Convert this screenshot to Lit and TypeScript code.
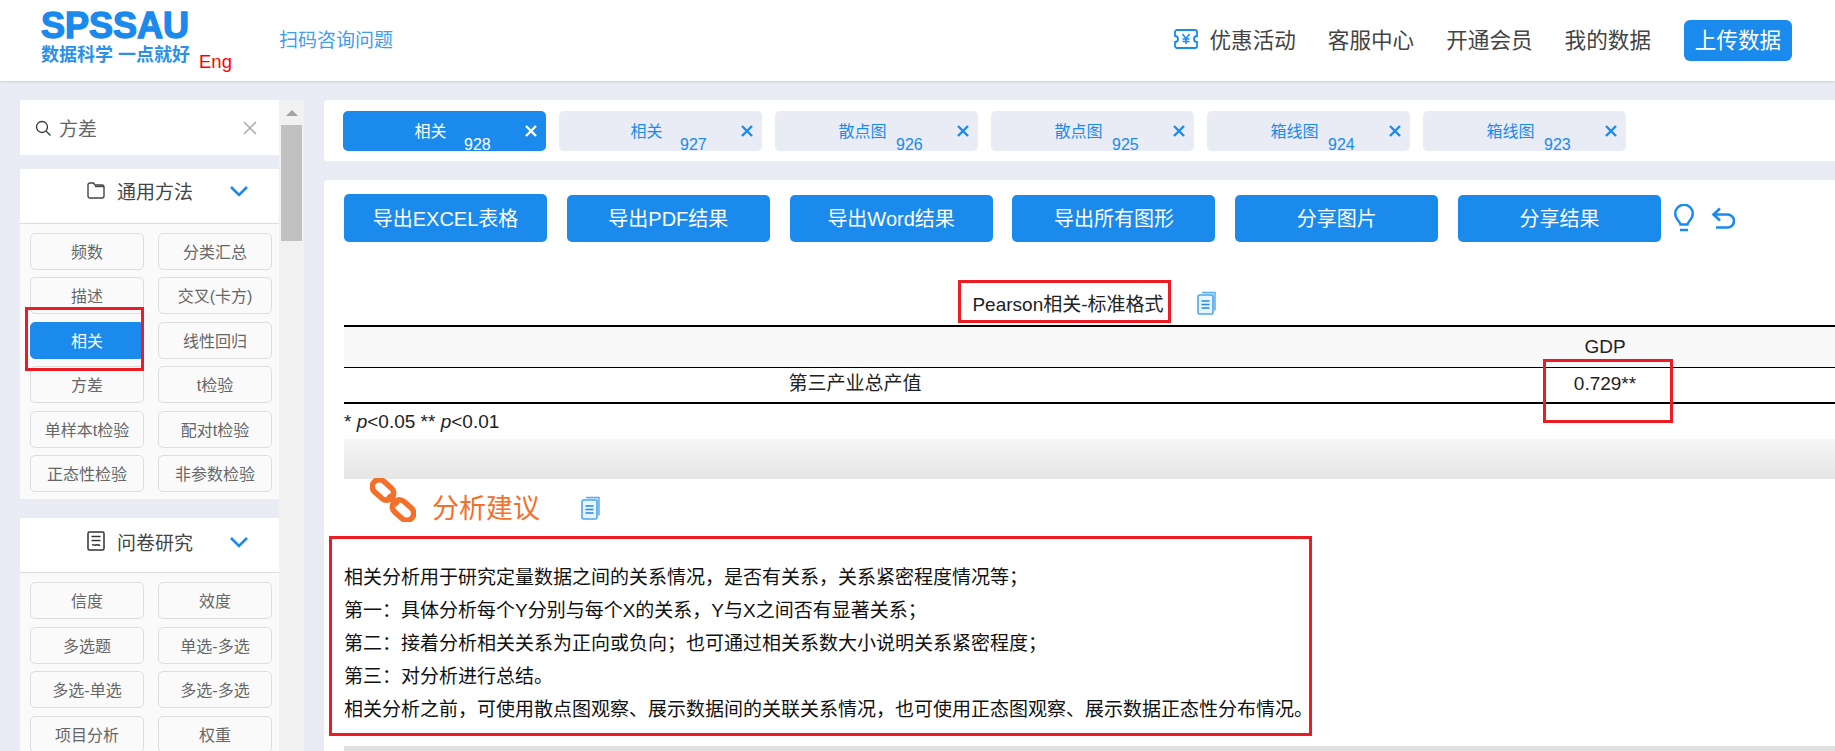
import { LitElement, html, css, svg } from "lit";
import { customElement } from "lit/decorators.js";

const tabs = [
  ["相关", "928"], ["相关", "927"], ["散点图", "926"], ["散点图", "925"], ["箱线图", "924"], ["箱线图", "923"],
];
const exportsList = ["导出EXCEL表格", "导出PDF结果", "导出Word结果", "导出所有图形", "分享图片", "分享结果"];
const general = ["频数", "分类汇总", "描述", "交叉(卡方)", "相关", "线性回归", "方差", "t检验", "单样本t检验", "配对t检验", "正态性检验", "非参数检验"];
const survey = ["信度", "效度", "多选题", "单选-多选", "多选-单选", "多选-多选", "项目分析", "权重"];
const advice = [
  "相关分析用于研究定量数据之间的关系情况，是否有关系，关系紧密程度情况等；",
  "第一：具体分析每个Y分别与每个X的关系，Y与X之间否有显著关系；",
  "第二：接着分析相关关系为正向或负向；也可通过相关系数大小说明关系紧密程度；",
  "第三：对分析进行总结。",
  "相关分析之前，可使用散点图观察、展示数据间的关联关系情况，也可使用正态图观察、展示数据正态性分布情况。",
];

const chevron = svg`<svg class="chev" width="20" height="12" viewBox="0 0 20 12"><path d="M2 2l8 8 8-8" fill="none" stroke="#1a8aec" stroke-width="2.6"/></svg>`;
const folder = svg`<svg width="18" height="17" viewBox="0 0 18 17" fill="none" stroke="#444" stroke-width="1.4"><path d="M1 3a2 2 0 0 1 2-2h3.5l1.5 2h7a2 2 0 0 1 2 2v9a2 2 0 0 1-2 2H3a2 2 0 0 1-2-2z"/><path d="M8 4.5h9"/></svg>`;
const doc = svg`<svg width="18" height="20" viewBox="0 0 18 20" fill="none" stroke="#333" stroke-width="1.5"><rect x="1" y="1" width="16" height="18" rx="1.5"/><path d="M4.5 5.5h9M4.5 9.5h9M5 14c1.5-1 2 .8 4 0s2.500.8 4 0"/></svg>`;
const copy = svg`<svg width="19" height="24" viewBox="0 0 19 24"><path d="M5 1.500h13v18" fill="#d6eafc" stroke="#5aaef0" stroke-width="1.500"/><rect x="1" y="4" width="15" height="19" rx="1.500" fill="#e8f4fe" stroke="#4da6ee" stroke-width="1.600"/><path d="M4.500 10h8M4.500 13.500h8M4.500 17h8" stroke="#1a8aec" stroke-width="1.500"/></svg>`;

@customElement("app-root")
export class AppRoot extends LitElement {
  static styles = css`
    :host { display: block; width: 1835px; height: 751px; overflow: hidden; position: relative; background: #e9ecf5;
      font-family: "Liberation Sans", "Noto Sans CJK SC", sans-serif; }
    * { box-sizing: border-box; }
    header { height: 81px; background: #fff; display: flex; align-items: center; box-shadow: 0 1px 2px rgba(0,0,0,.12); position: relative; padding: 0 43px 0 41px; }
    .logo { display: flex; flex-direction: column; width: 158px; align-self: flex-start; padding-top: 6px; }
    .logo b { font-size: 36px; line-height: 40px; color: #1a8aec; -webkit-text-stroke: 1.4px #1a8aec; letter-spacing: 0; }
    .logo span { font-size: 18px; line-height: 20px; font-weight: 700; color: #2b90e8; white-space: nowrap; margin-top: -1px; }
    .eng { color: #f00; font-size: 18.500px; align-self: flex-start; margin-top: 51px; width: 80px; }
    .qr { color: #3f9dee; font-size: 19px; margin-top: -5px; }
    nav { margin-left: auto; display: flex; align-items: center; gap: 32px; color: #444; font-size: 21.600px; }
    nav span { padding-bottom: 5px; }
    .promo { display: flex; align-items: center; gap: 11px; }
    .promo svg { margin-bottom: 3px; }
    .upload { background: #1a8aec; color: #fff; width: 108px; height: 41px; border-radius: 6px; display: flex; align-items: center; justify-content: center; margin-left: 1px; padding-bottom: 5px; }

    .body { display: flex; height: 670px; padding: 19px 0 0 20px; }
    .side { width: 284px; height: 651px; display: flex; flex-shrink: 0; overflow: hidden; }
    .side-col { width: 259px; flex-shrink: 0; display: flex; flex-direction: column; }
    .search { height: 55px; background: #fff; display: flex; align-items: center; padding: 0 22px 0 15px; color: #666; font-size: 19px; gap: 8px; margin-bottom: 14px; flex-shrink: 0; }
    .search em { font-style: normal; flex: 1; }
    .group { flex-shrink: 0; margin-bottom: 19px; background: #fafafa; padding-bottom: 7px; }
    .ghead { height: 55px; background: #fff; border-bottom: 1px solid #ddd; display: flex; align-items: center; padding-left: 67px; color: #444; font-size: 19px; margin-bottom: 8.500px; padding-bottom: 8px; }
    .ghead.first { padding-bottom: 12px; }
    .ghead svg:first-child { margin-right: 12px; }
    .chev { margin-left: 36px; margin-top: 2px; }
    .grid { display: grid; grid-template-columns: 114px 114px; column-gap: 14px; row-gap: 7.600px; padding-left: 10px; }
    .btn { height: 37px; border: 1px solid #ddd; border-radius: 5px; background: #fafafa; color: #666; font-size: 16px; display: flex; align-items: center; justify-content: center; white-space: nowrap; padding-bottom: 1px; }
    .btn.on { background: #1a8aec; border-color: #1a8aec; color: #fff; }
    .track { width: 25px; background: #f1f1f1; position: relative; padding: 25px 2px 0; }
    .track i { display: block; height: 116px; background: #c1c1c1; }
    .track::before { content: ""; position: absolute; left: 7px; top: 10px; border: 6px solid transparent; border-top: 0; border-bottom: 6px solid #a3a3a3; }

    main { flex: 1; min-width: 0; margin-left: 20px; display: flex; flex-direction: column; gap: 19px; }
    .tabs { height: 61px; background: #fff; border-radius: 4px 0 0 4px; display: flex; gap: 13px; padding: 11px 19px; }
    .tab { width: 203px; height: 40px; border-radius: 5px; background: #e9ecf5; color: #1a8aec; display: flex; overflow: hidden; position: relative; font-size: 16px; flex-shrink: 0; }
    .tab.on { background: #1a8aec; color: #fff; }
    .tab .lab { width: 175px; flex-shrink: 0; text-align: center; line-height: 18px; margin-top: 12px; }
    .tab .num { margin-left: -54px; line-height: 18px; margin-top: 25px; }
    .tab .x { position: absolute; right: 9px; top: 14px; }
    .card { background: #fff; border-radius: 4px 0 0 0; flex: 1; padding: 14px 0 0 20px; overflow: hidden; min-height: 0; }
    .actions { display: flex; gap: 19.800px; align-items: flex-end; }
    .act { width: 203px; height: 47px; border-radius: 5px; background: #1a8aec; color: #fff; font-size: 20px; display: flex; align-items: center; justify-content: center; flex-shrink: 0; padding-bottom: 2px; }
    .act:first-child { height: 48px; }
    .tools { display: flex; align-items: center; gap: 17px; margin-left: -7px; align-self: center; }
    .title { width: 1500px; height: 83px; display: flex; align-items: center; justify-content: center; gap: 33px; padding-top: 37px; font-size: 19px; color: #222; }
    .title svg { margin-top: 2px; }
    .tbl { width: 1500px; border-top: 2px solid #000; border-bottom: 2px solid #000; font-size: 19px; color: #222; }
    .tr { display: grid; grid-template-columns: 1022px 478px; text-align: center; }
    .tr.h { height: 41px; background: #f9f9f9; border-bottom: 1px solid #000; line-height: 40px; }
    .tr.b { height: 34px; line-height: 32px; }
    .note { font-size: 19px; color: #222; height: 35px; line-height: 35px; }
    .gray { width: 1500px; height: 40px; background: linear-gradient(#f5f5f5, #e6e6e6); }
    .sug { height: 53px; display: flex; align-items: flex-start; padding-left: 26px; color: #f3702a; font-size: 27px; }
    .sug .t { margin: 13px 0 0 16px; line-height: 34px; }
    .sug .cp { margin: 17px 0 0 41px; }
    .adv { padding-top: 29px; height: 214px; font-size: 19px; line-height: 33px; color: #111; white-space: nowrap; }
    .gray2 { width: 1500px; height: 5px; background: #e0e0e0; }

    .mark { position: absolute; border: 3px solid #ed1c24; pointer-events: none; }
  `;

  private btn(t: string) {
    return html`<div class="btn ${t === "相关" ? "on" : ""}">${t}</div>`;
  }

  render() {
    return html`
      <header>
        <div class="logo"><b>SPSSAU</b><span>数据科学 一点就好</span></div>
        <div class="eng">Eng</div>
        <div class="qr">扫码咨询问题</div>
        <nav>
          <div class="promo">
            <svg width="24" height="20" viewBox="0 0 24 20" fill="none" stroke="#1a8aec" stroke-width="1.800">
              <path d="M3 1h18a2 2 0 0 1 2 2v4a3 3 0 0 0 0 6v4a2 2 0 0 1-2 2H3a2 2 0 0 1-2-2v-4a3 3 0 0 0 0-6V3a2 2 0 0 1 2-2z"/>
              <path d="M8.500 5l3.500 4.500L15.500 5M12 9.500V15M8.500 10h7M8.500 12.500h7" stroke-width="1.500"/>
            </svg>
            <span>优惠活动</span>
          </div>
          <span>客服中心</span><span>开通会员</span><span>我的数据</span>
          <div class="upload">上传数据</div>
        </nav>
      </header>

      <div class="body">
        <aside class="side">
          <div class="side-col">
            <div class="search">
              <svg width="16" height="16" viewBox="0 0 16 16" fill="none" stroke="#333" stroke-width="1.300"><circle cx="7" cy="7" r="5.500"/><path d="M11 11l4.500 4.500"/></svg>
              <em>方差</em>
              <svg width="14" height="14" viewBox="0 0 14 14" stroke="#aaa" stroke-width="1.500"><path d="M1 1l12 12M13 1L1 13"/></svg>
            </div>
            <section class="group">
              <div class="ghead first">${folder}<span>通用方法</span>${chevron}</div>
              <div class="grid">${general.map((t) => this.btn(t))}</div>
            </section>
            <section class="group">
              <div class="ghead">${doc}<span>问卷研究</span>${chevron}</div>
              <div class="grid">${survey.map((t) => this.btn(t))}</div>
            </section>
          </div>
          <div class="track"><i></i></div>
        </aside>

        <main>
          <div class="tabs">
            ${tabs.map(([l, n], i) => html`
              <div class="tab ${i === 0 ? "on" : ""}">
                <span class="lab">${l}</span><span class="num">${n}</span>
                <svg class="x" width="12" height="12" viewBox="0 0 12 12" stroke="currentColor" stroke-width="2.400"><path d="M1 1l10 10M11 1L1 11"/></svg>
              </div>`)}
          </div>
          <div class="card">
            <div class="actions">
              ${exportsList.map((t) => html`<div class="act">${t}</div>`)}
              <div class="tools">
                <svg width="20" height="28" viewBox="0 0 20 28" fill="none" stroke="#1a8aec" stroke-width="2.400"><path d="M6.500 20.500c0-3-5.300-5-5.300-11a8.800 8.800 0 0 1 17.600 0c0 6-5.300 8-5.300 11z"/><path d="M6 26h8" stroke-width="2.600"/></svg>
                <svg width="24" height="22" viewBox="0 0 24 22" fill="none" stroke="#1a8aec" stroke-width="2.600"><path d="M9 1.500L2.500 7.500 9 13.500"/><path d="M2.500 7.500h14a6 6 0 0 1 0 13H5"/></svg>
              </div>
            </div>
            <div class="title"><span>Pearson相关-标准格式</span>${copy}</div>
            <div class="tbl">
              <div class="tr h"><div></div><div>GDP</div></div>
              <div class="tr b"><div>第三产业总产值</div><div>0.729**</div></div>
            </div>
            <div class="note">* <i>p</i>&lt;0.05 ** <i>p</i>&lt;0.01</div>
            <div class="gray"></div>
            <div class="sug">
              <svg width="46" height="44" viewBox="0 0 46 44" fill="none" stroke="#f3702a" stroke-width="5.500" style="flex-shrink:0;margin-top:-1px">
                <rect x="1" y="5" width="24" height="14" rx="7" transform="rotate(42 13 12)"/>
                <rect x="21" y="25" width="24" height="14" rx="7" transform="rotate(42 33 32)"/>
                <path d="M18 17l10 10"/>
              </svg>
              <span class="t">分析建议</span>
              <span class="cp">${copy}</span>
            </div>
            <div class="adv">${advice.map((a) => html`<div>${a}</div>`)}</div>
            <div class="gray2"></div>
          </div>
        </main>
      </div>

      <div class="mark" style="left:25px;top:307px;width:119px;height:64px"></div>
      <div class="mark" style="left:958px;top:280px;width:213px;height:43px"></div>
      <div class="mark" style="left:1543px;top:359px;width:130px;height:64px"></div>
      <div class="mark" style="left:329px;top:536px;width:983px;height:200px"></div>
    `;
  }
}
